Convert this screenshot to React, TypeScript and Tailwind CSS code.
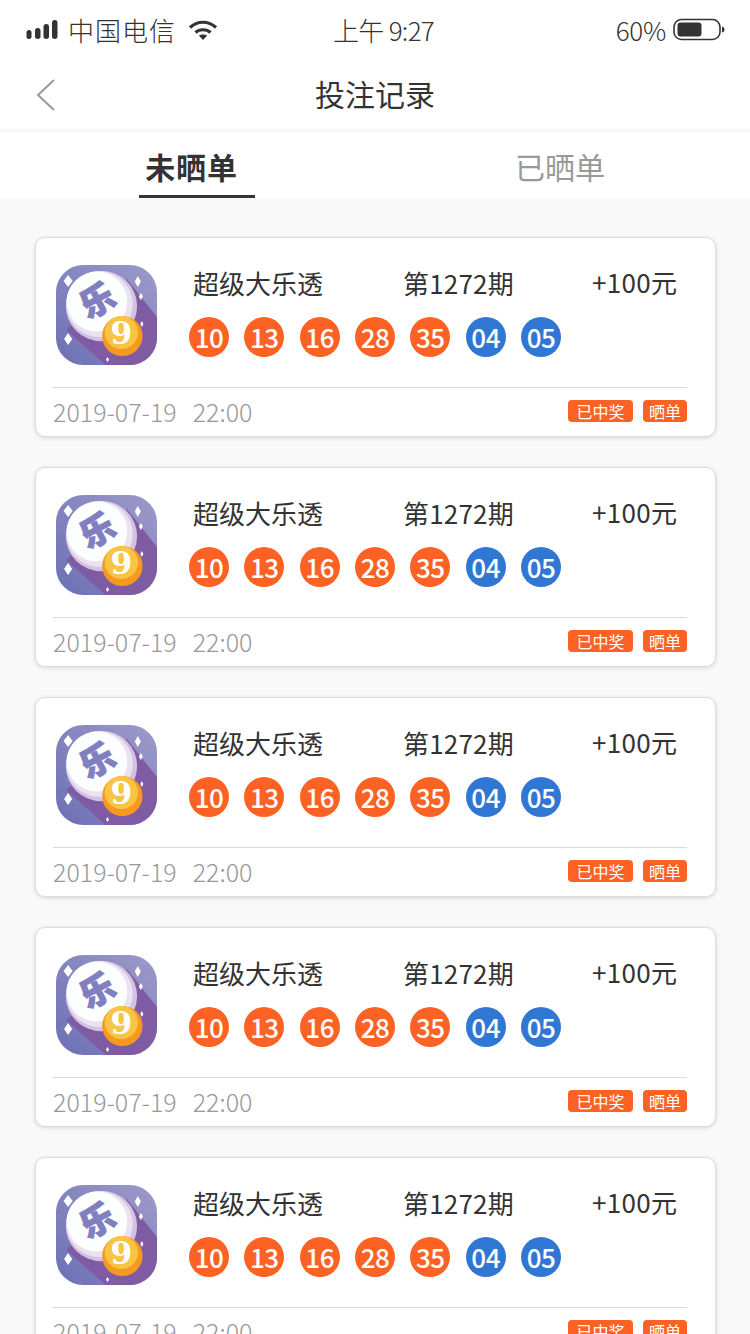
const sans = "font-['Noto_Sans_CJK_SC','Noto_Sans',sans-serif]"

const redBalls = ['10', '13', '16', '28', '35']
const blueBalls = ['04', '05']

function SignalIcon() {
  return (
    <svg width="32" height="22" viewBox="0 0 32 22" className="shrink-0">
      <rect x="0.5" y="11" width="5" height="9" rx="2.5" fill="#333" />
      <rect x="9" y="9" width="5.5" height="11" rx="2.7" fill="#333" />
      <rect x="17.5" y="5" width="5.5" height="15" rx="2.7" fill="#333" />
      <rect x="26" y="1" width="5.5" height="19" rx="2.7" fill="#333" />
    </svg>
  )
}

function WifiIcon() {
  return (
    <svg width="30" height="22" viewBox="0 0 30 22" fill="none" className="shrink-0">
      <path d="M2 8.5C9.5 1.5 20.5 1.5 28 8.5" stroke="#333" strokeWidth="3.2" />
      <path d="M7.5 13.5C11.5 9.8 18.5 9.8 22.5 13.5" stroke="#333" strokeWidth="3.2" />
      <path d="M15 21L10.8 16.6C13 15 17 15 19.2 16.6Z" fill="#333" />
    </svg>
  )
}

function BatteryIcon() {
  return (
    <svg width="52" height="24" viewBox="0 0 52 24" fill="none" className="shrink-0">
      <rect x="1" y="1.5" width="46" height="20" rx="7.5" stroke="#333" strokeWidth="1.6" />
      <rect x="4.5" y="4.5" width="24" height="14" rx="3" fill="#333" />
      <path d="M49 8.5C50.8 9 51.5 10 51.5 11.5C51.5 13 50.8 14 49 14.5Z" fill="#333" />
    </svg>
  )
}

function LotteryLogo({ id }: { id: number }) {
  const bg = `logo-bg-${id}`
  const clip = `logo-clip-${id}`
  return (
    <svg width="101" height="100" viewBox="0 0 100 100" preserveAspectRatio="none" className="shrink-0">
      <defs>
        <linearGradient id={bg} x1="1" y1="0" x2="0" y2="1">
          <stop offset="0" stopColor="#9e9bca" />
          <stop offset="1" stopColor="#6b6fb4" />
        </linearGradient>
        <clipPath id={clip}>
          <rect width="100" height="100" rx="27" />
        </clipPath>
      </defs>
      <g clipPath={`url(#${clip})`}>
        <rect width="100" height="100" fill={`url(#${bg})`} />
        <path d="M70 14L100 52V100H49L10 65Z" fill="#7f5ba4" />
      </g>
      <circle cx="45" cy="41" r="35.300" fill="#d3c2e0" />
      <circle cx="43" cy="39" r="33" fill="#ebe2f1" />
      <circle cx="40.600" cy="36.600" r="30" fill="#fdfefe" />
      <text
        x="41"
        y="48"
        textAnchor="middle"
        fontSize="34"
        fontWeight="900"
        fill="#8080c0"
        stroke="#8080c0"
        strokeWidth="1.2"
        transform="rotate(-28 41 36)"
        fontFamily="'Noto Sans CJK SC',sans-serif"
      >
        乐
      </text>
      <circle cx="65.700" cy="71" r="20" fill="#f7981f" />
      <circle cx="64.700" cy="67.500" r="16.500" fill="#f8c445" />
      <text
        x="64.700"
        y="79"
        textAnchor="middle"
        fontSize="31"
        fontWeight="700"
        fill="#fff"
        fontFamily="'DejaVu Serif','Liberation Serif',serif"
      >
        9
      </text>
      <path d="M12 10L16.5 16L12 22L7.5 16Z" fill="#fff" />
      <path d="M81 11L84 16.500L81 22L78 16.500Z" fill="#fff" />
      <path d="M84 28L86 31.500L84 35L82 31.500Z" fill="#fff" />
      <path d="M12 68L16 74L12 80L8 74Z" fill="#fff" />
      <path d="M85 56L86.500 59L85 62L83.500 59Z" fill="#fff" />
      <path d="M51 92L52.500 94.500L51 97L49.500 94.500Z" fill="#fff" />
    </svg>
  )
}

function Ball({ value, color }: { value: string; color: string }) {
  return (
    <span
      className={`flex h-10 w-10 items-center justify-center rounded-full text-[26px] leading-none font-medium tracking-[-0.5px] text-white ${color}`}
    >
      {value}
    </span>
  )
}

function RecordCard({ id }: { id: number }) {
  return (
    <div className="h-[200px] w-[681px] shrink-0 overflow-hidden rounded-[10px] border border-[#dcdcdc] bg-white pr-[28px] pl-[17px] shadow-[0_1px_4px_rgba(0,0,0,0.14)]">
      <div className="flex h-[150px] border-b border-[#d9d9d9]">
        <div className="mt-[27px] ml-[3px]">
          <LotteryLogo id={id} />
        </div>
        <div className="ml-[32px] flex-1">
          <div className="mt-[26px] flex h-[38px] items-center text-[26px] leading-none whitespace-nowrap text-[#333]">
            <span className="ml-[4px] w-[210px]">超级大乐透</span>
            <span className="w-[189px] tracking-[0.2px]">第1272期</span>
            <span className="-mt-[2px] tracking-[0.3px]">+100元</span>
          </div>
          <div className="mt-[15px] flex gap-[15.33px]">
            {redBalls.map((n) => (
              <Ball key={n} value={n} color="bg-[#fd6225]" />
            ))}
            {blueBalls.map((n) => (
              <Ball key={n} value={n} color="bg-[#3077d4]" />
            ))}
          </div>
        </div>
      </div>
      <div className="flex h-[48px] items-center justify-between">
        <span className="-mt-[2px] flex gap-[16px] text-[25px] leading-none font-light text-[#999]">
          <span>2019-07-19</span>
          <span>22:00</span>
        </span>
        <span className="-mt-[2px] flex gap-[10px] text-[16px] leading-none text-white">
          <span className="flex h-[22px] w-[65px] items-center justify-center rounded-[4px] bg-[#fd6225] pb-[1px]">已中奖</span>
          <span className="flex h-[22px] w-[44px] items-center justify-center rounded-[4px] bg-[#fd6225] pb-[1px]">晒单</span>
        </span>
      </div>
    </div>
  )
}

export default function App() {
  return (
    <div className={`h-[1334px] w-[750px] overflow-hidden bg-[#f9f9f9] ${sans}`}>
      <div className="bg-white">
        <div className="flex h-[60px] items-center pr-[25px] pl-[26px] text-[#333]">
          <div className="flex w-[220px] items-center gap-[10px]">
            <SignalIcon />
            <span className="text-[26px] leading-none font-light tracking-[1px] whitespace-nowrap">中国电信</span>
            <span className="ml-[2px]">
              <WifiIcon />
            </span>
          </div>
          <span className="ml-[87px] text-[26px] leading-none font-light tracking-[-0.7px]">上午 9:27</span>
          <div className="ml-auto flex items-center gap-[7px]">
            <span className="text-[26px] leading-none font-light tracking-[-0.3px]">60%</span>
            <BatteryIcon />
          </div>
        </div>
        <div className="relative flex h-[69px] items-center justify-center">
          <svg width="20" height="32" viewBox="0 0 20 32" fill="none" className="absolute top-[19px] left-[36px]">
            <path d="M18 1L2 16L18 31" stroke="#999" strokeWidth="2" />
          </svg>
          <span className="-mt-[3px] text-[30px] leading-none text-[#333]">投注记录</span>
        </div>
      </div>
      <div className="h-[3px] bg-[#f7f7f7]" />
      <div className="flex h-[66px] bg-white">
        <div className="ml-[139px] flex w-[116px] flex-col items-center">
          <span className="flex-1 pt-[19px] pr-[11px] text-[30px] leading-none font-bold tracking-[0.8px] text-[#333]">未晒单</span>
          <span className="h-[3px] w-full bg-[#333]" />
        </div>
        <div className="ml-[260px] pt-[19px] text-[30px] leading-none text-[#999]">已晒单</div>
      </div>
      <div className="flex flex-col gap-[30px] pt-[39px] pl-[35px]">
        {[0, 1, 2, 3, 4].map((id) => (
          <RecordCard key={id} id={id} />
        ))}
      </div>
    </div>
  )
}
